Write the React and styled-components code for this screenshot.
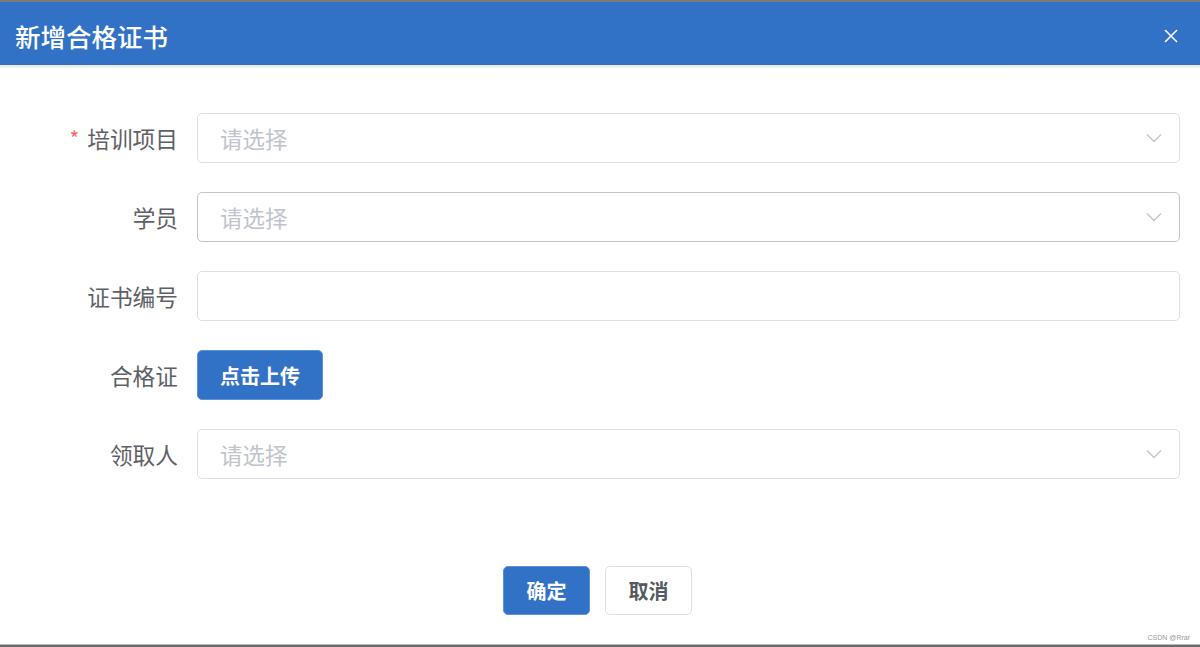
import React from "react";
import styled, { createGlobalStyle } from "styled-components";

const GlobalStyle = createGlobalStyle`
  html, body { margin: 0; padding: 0; background: #ffffff; }
  body { font-family: "Noto Sans CJK SC", "Noto Sans", sans-serif; }
  * { box-sizing: border-box; }
`;

const Page = styled.div`
  width: 1200px;
  height: 647px;
  display: flex;
  flex-direction: column;
  background: #ffffff;
  overflow: hidden;
`;

const TopStrip = styled.div`
  height: 2px;
  background: #7b7b7b;
  flex: none;
`;

const Header = styled.header`
  height: 63px;
  flex: none;
  background: #3272c6;
  display: flex;
  align-items: center;
  justify-content: space-between;
  padding: 4px 22px 0 15px;
`;

const Title = styled.h1`
  margin: 0;
  color: #ffffff;
  font-size: 25.5px;
  font-weight: 500;
`;

const CloseButton = styled.button`
  border: none;
  background: transparent;
  padding: 0;
  width: 14px;
  height: 14px;
  display: flex;
  cursor: pointer;
`;

const HeaderShade = styled.div`
  height: 3px;
  flex: none;
  background: linear-gradient(#dfe6f0, #f6f6f6);
`;

const Form = styled.form`
  display: flex;
  flex-direction: column;
  gap: 29px;
  padding: 45px 20px 0 0;
`;

const Row = styled.div`
  display: grid;
  grid-template-columns: 178px 1fr;
  column-gap: 19px;
  align-items: center;
  height: 50px;
`;

const Label = styled.label`
  text-align: right;
  font-size: 22.7px;
  font-weight: 400;
  color: #5e6066;
  white-space: nowrap;
`;

const Required = styled.span`
  color: #f56c6c;
  font-size: 21px;
  margin-right: 8px;
  position: relative;
  top: -1px;
`;

const Field = styled.div`
  height: 50px;
  border: 1px solid ${(p) => (p.$hover ? "#c0c4cc" : "#dcdfe6")};
  border-radius: 5px;
  display: flex;
  align-items: center;
  justify-content: space-between;
  padding: 0 17px 0 23px;
  background: #fff;
`;

const Placeholder = styled.span`
  font-size: 22.5px;
  color: #c0c4cc;
  margin-left: -1px;
`;

const UploadButton = styled.button`
  justify-self: start;
  width: 126px;
  height: 50px;
  border: 1px solid #5a94e0;
  border-radius: 5px;
  background: #3272c6;
  color: #ffffff;
  font-family: inherit;
  font-size: 20px;
  font-weight: 700;
`;

const Footer = styled.div`
  display: flex;
  justify-content: center;
  gap: 15px;
  padding: 87px 5px 0 0;
`;

const FooterButton = styled.button`
  width: 87px;
  height: 49px;
  border-radius: 5px;
  font-family: inherit;
  font-size: 20px;
  font-weight: 700;
  border: 1px solid ${(p) => (p.$primary ? "#5a94e0" : "#dcdfe6")};
  background: ${(p) => (p.$primary ? "#3272c6" : "#ffffff")};
  color: ${(p) => (p.$primary ? "#ffffff" : "#555a61")};
`;

const Spacer = styled.div`
  flex: 1;
  display: flex;
  justify-content: flex-end;
  align-items: flex-end;
  padding: 0 10px 3px 0;
`;

const Watermark = styled.span`
  font-family: "Liberation Sans", sans-serif;
  font-size: 7px;
  color: #9a9a9a;
`;

const BottomBar = styled.div`
  height: 3px;
  flex: none;
  background: #6a6a6a;
  border-top: 1px solid #b9b9b9;
`;

const Chevron = () => (
  <svg width="16" height="10" viewBox="0 0 16 10">
    <polyline points="1,1.5 8,8.5 15,1.5" fill="none" stroke="#c0c4cc" strokeWidth="1.3" />
  </svg>
);

const CloseIcon = () => (
  <svg width="14" height="14" viewBox="0 0 14 14">
    <path d="M1.5 1.5 L12.5 12.5 M12.5 1.5 L1.5 12.5" stroke="#ffffff" strokeWidth="1.6" strokeLinecap="round" />
  </svg>
);

const SelectField = ({ hover, placeholder }) => (
  <Field $hover={hover}>
    <Placeholder>{placeholder}</Placeholder>
    {placeholder ? <Chevron /> : null}
  </Field>
);

export default function App() {
  return (
    <>
      <GlobalStyle />
      <Page>
        <TopStrip />
        <Header>
          <Title>新增合格证书</Title>
          <CloseButton aria-label="close">
            <CloseIcon />
          </CloseButton>
        </Header>
        <HeaderShade />
        <Form onSubmit={(e) => e.preventDefault()}>
          <Row>
            <Label>
              <Required>*</Required>培训项目
            </Label>
            <SelectField placeholder="请选择" />
          </Row>
          <Row>
            <Label>学员</Label>
            <SelectField placeholder="请选择" hover />
          </Row>
          <Row>
            <Label>证书编号</Label>
            <Field />
          </Row>
          <Row>
            <Label>合格证</Label>
            <UploadButton type="button">点击上传</UploadButton>
          </Row>
          <Row>
            <Label>领取人</Label>
            <SelectField placeholder="请选择" />
          </Row>
        </Form>
        <Footer>
          <FooterButton $primary type="button">确定</FooterButton>
          <FooterButton type="button">取消</FooterButton>
        </Footer>
        <Spacer>
          <Watermark>CSDN @Rrar</Watermark>
        </Spacer>
        <BottomBar />
      </Page>
    </>
  );
}
